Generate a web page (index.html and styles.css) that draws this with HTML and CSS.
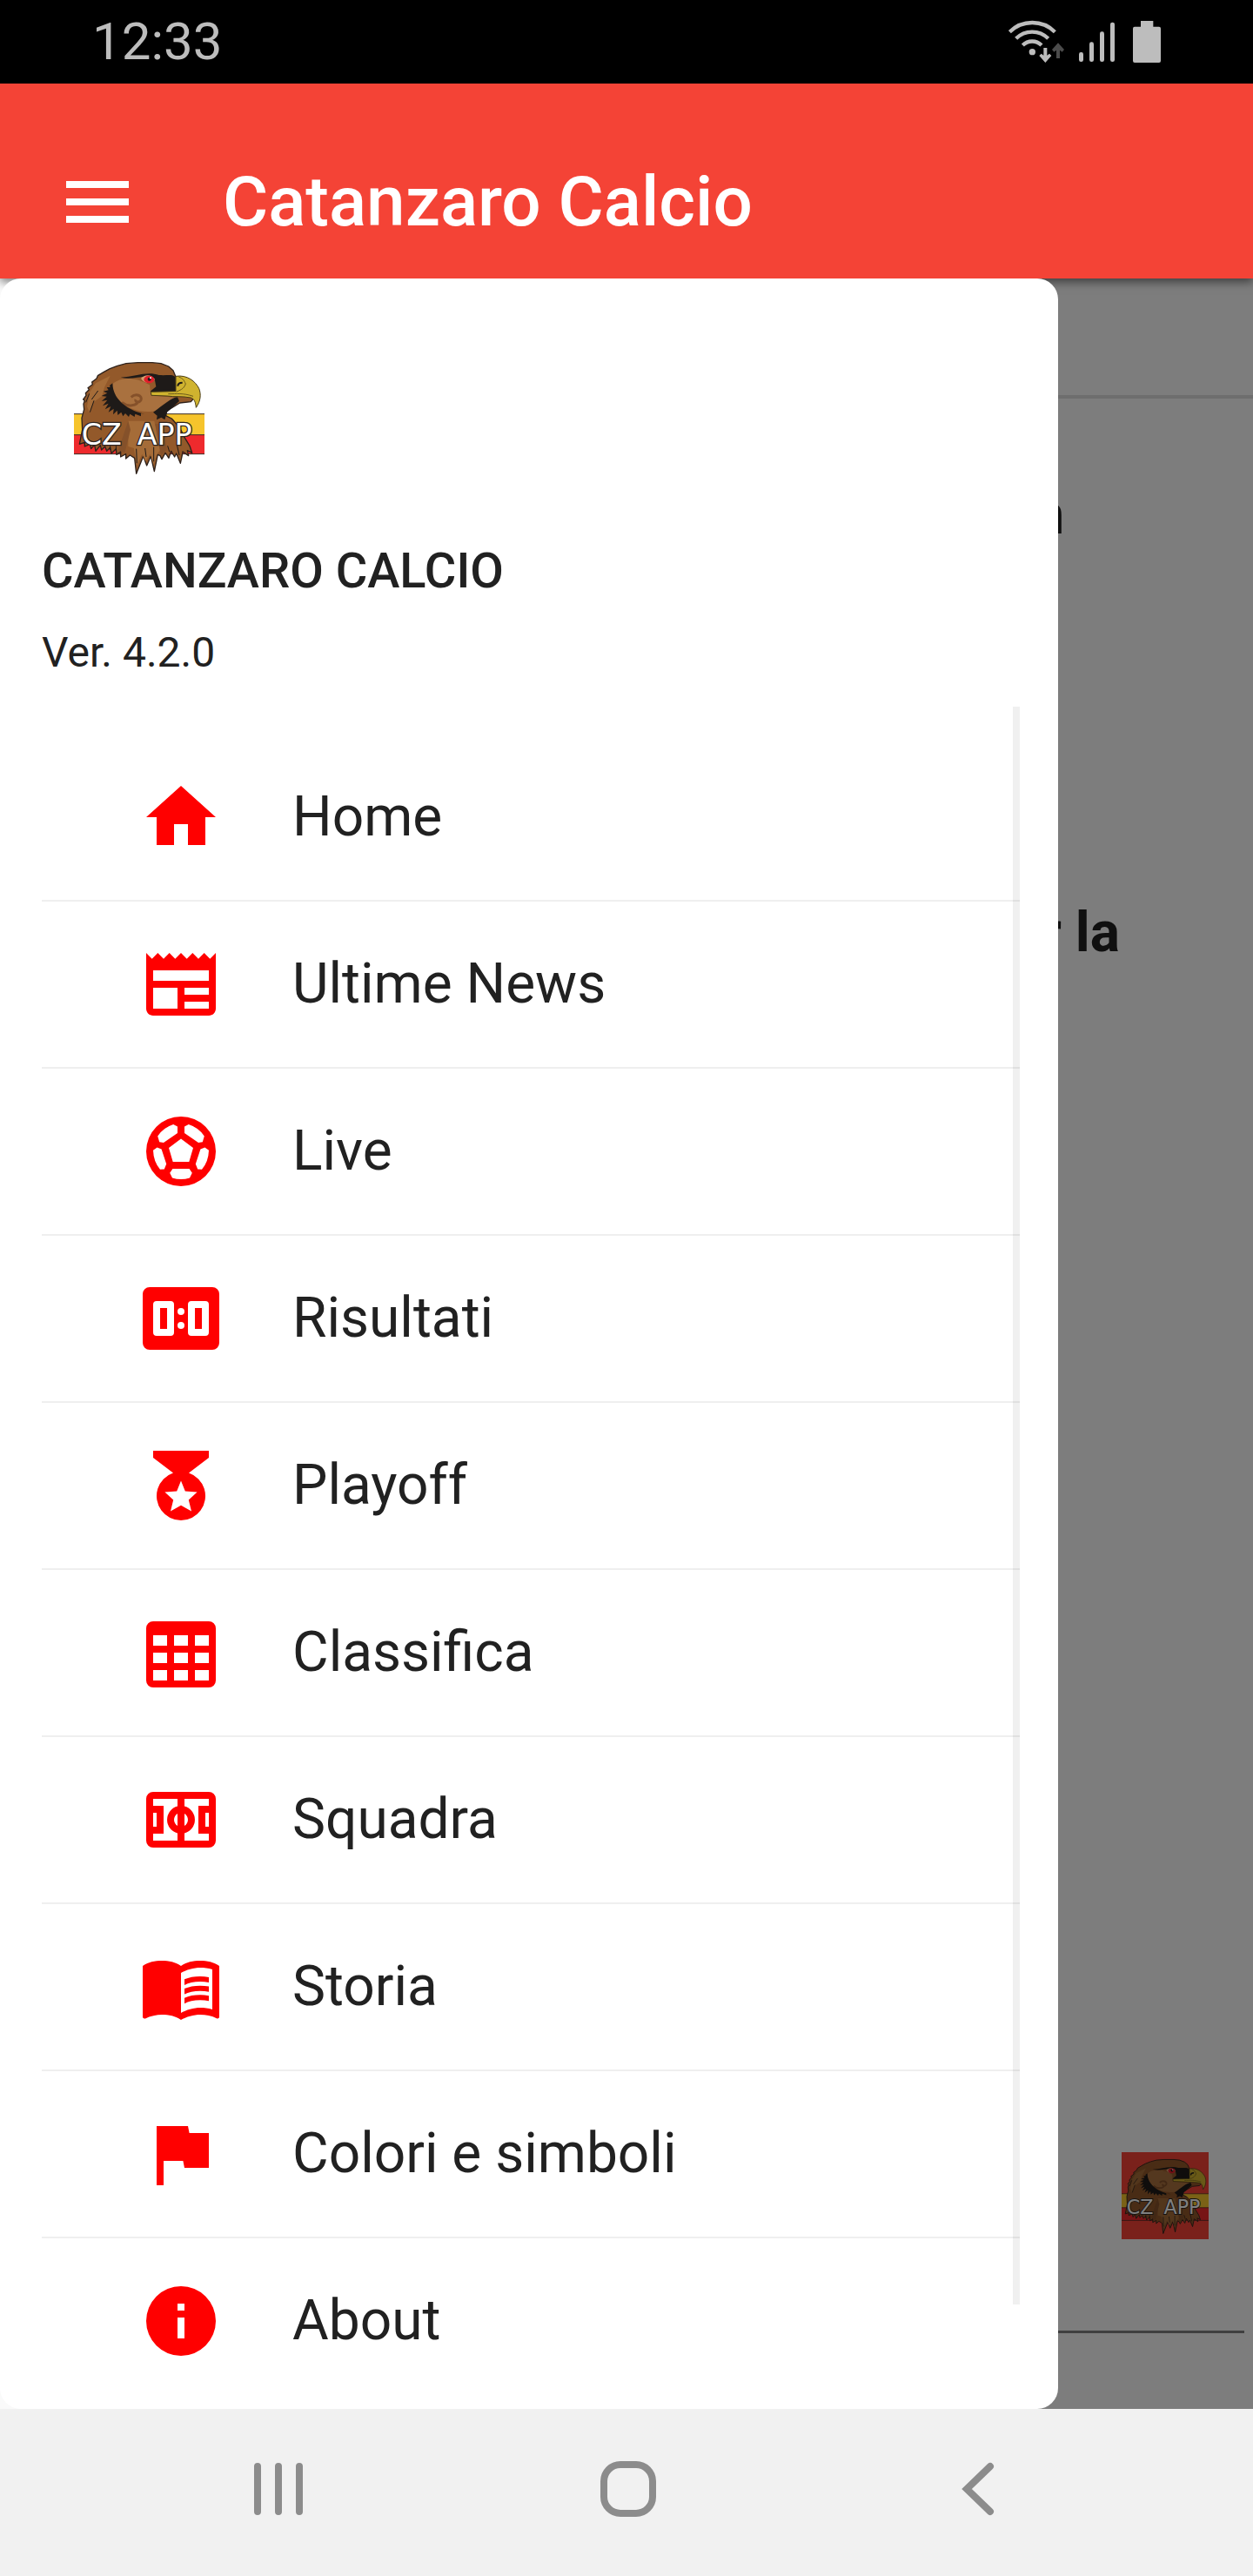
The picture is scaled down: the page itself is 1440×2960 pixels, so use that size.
FILE: index.html
```html
<!DOCTYPE html>
<html lang="it">
<head>
<meta charset="utf-8">
<meta name="viewport" content="width=device-width, initial-scale=1">
<title>Catanzaro Calcio</title>
<link rel="stylesheet" href="styles.css">
</head>
<body>
<svg class="defs" width="0" height="0" aria-hidden="true">
  <symbol id="eagle" viewBox="0 0 450 450">
    <g transform="translate(-75 -41)">
    <!-- flag bands -->
    <path fill="#f6c42c" d="M75 256h450v72H75z"/>
    <path fill="#ee2a2d" d="M75 328h450v66H75z"/>
    <path fill="none" stroke="#3a2a22" stroke-width="3" d="M75 256h450M75 328h450M75 394h450"/>
    <!-- head and neck feathers -->
    <path fill="#93592a" stroke="#2d211b" stroke-width="4" stroke-linejoin="round" d="M108 222L112 210 107 206 117 192 115 184 127 172 123 166 139 154 137 146 153 134 157 124 177 112 199 100 225 90 255 82 295 79 345 79 375 82 401 92 417 106 425 126 430 186 490 200 478 214 440 218 394 246 392 262 412 272 428 290 444 312 458 340 474 366 482 390 466 382 470 400 450 386 448 398 442 426 428 392 422 404 410 384 402 408 390 390 378 412 372 400 364 396 352 454 340 402 326 434 314 402 290 462 284 408 268 398 254 410 254 394 236 404 236 386 222 396 220 376 204 392 200 372 188 384 182 368 170 380 166 364 150 384 146 362 134 376 130 360 112 368 112 354 94 360 98 340 104 310 102 270 110 240z"/>
    <!-- lighter cheek and neck planes -->
    <path fill="#a9713f" d="M208 152c30-26 80-24 128 4l4 36 88 8-34 30c-30 22-84 24-124 6-40-16-62-48-62-84z"/>
    <path fill="#a56c38" d="M150 150l50-26-20 40-8 30-30 22-14 34-8-20 10-50z"/>
    <path fill="#a56c38" d="M262 280h90l20 100-14 20-8 30-12-36-16 26-12-26-18 40-10-60-20-6z"/>
    <path fill="#85512a" d="M262 280l-34 100 22 10 20-80zM355 290l20 110 20-20-10-90z"/>
    <path fill="none" stroke="#85512a" stroke-width="9" d="M272 198c18-16 40-4 34 10-6 12-22 6-18-2M240 216c20 16 44 12 54 2"/>
    <!-- dark shading -->
    <path fill="#1e1a18" d="M208 150l-10 8 2 6-12 0 6 10-18 4 14 6-20 10 18 2-18 16 20-4-16 20 20-8-12 20 20-10-8 20 18-12-2 20 14-14 2 16 12-10 6 14 8-10 12 12 4-10 16 10 2-10 20 8 0-10 24 4c-50-6-122-42-122-108z"/>
    <path fill="#1e1a18" d="M236 130c50-2 90-22 132-8 30 2 44-4 56 6l4 52-72 4-18-6 20-16-4-22-30-12c-30 0-56 10-88 2z"/>
    <path fill="#1e1a18" d="M432 198c-22 2-46 26-84 52l14 12-2 14 16-8 12 8 8-26 22-20 20-18z"/>
    <path fill="none" stroke="#1e1a18" stroke-width="3" d="M128 186l-12 30M144 210l-14 40M158 176l-22 30M290 376l2 50M320 374l4 30M350 370v50M398 366l6 20M430 362l8 36M200 366v14M220 366v16"/>
    <!-- eye -->
    <path fill="#d5a070" d="M306 134c12-14 34-16 48 2-12 18-34 18-48-2z"/>
    <ellipse cx="334" cy="137" rx="18" ry="13" fill="#e0202b"/>
    <circle cx="335" cy="136" r="6" fill="#1e1a18"/>
    <circle cx="339" cy="132" r="3" fill="#fff"/>
    <!-- beak -->
    <path fill="#d0b32f" stroke="#4a3d16" stroke-width="3" stroke-linejoin="round" d="M426 126c40-6 68 18 80 42 8 20 6 44-10 66-2-20-6-30-18-34-30-6-56-2-82-6l-54-2-2-12 86-2z"/>
    <path fill="none" stroke="#6d5c1a" stroke-width="3" d="M428 180c10-6 26-8 32-28-6-12-8-18-24-24M400 187c30 0 50-4 86 8"/>
    <path fill="none" stroke="#1e1a18" stroke-width="6" d="M433 160c0-10 8-12 16-12"/>
    </g>
  </symbol>
</svg>

<div class="status-bar">
  <time class="clock">12:33</time>
  <div class="status-icons">
    <svg class="wifi" viewBox="177 66 192 150" aria-hidden="true">
      <g fill="none" stroke="#bdbdbd" stroke-width="13"><path d="M181 107a111 111 0 0 1 156 0M203 130a78 78 0 0 1 111 0M226 153a46 46 0 0 1 65 0"/></g>
      <circle cx="259" cy="176" r="11" fill="#bdbdbd"/>
      <path fill="#bdbdbd" d="M298 162h12v26l8-6 7 7-21 24-21-24 7-7 8 6z"/>
      <path fill="#4c4c4c" d="M342 198h12v-28l8 6 7-8-21-23-21 23 7 8 8-6z"/>
    </svg>
    <svg class="signal" viewBox="420 75 123 141" aria-hidden="true"><g fill="#bdbdbd"><rect x="420" y="180" width="15" height="33" rx="7"/><rect x="456" y="145" width="15" height="68" rx="7"/><rect x="492" y="109" width="15" height="104" rx="7"/><rect x="528" y="77" width="15" height="136" rx="7"/></g></svg>
    <svg class="battery" viewBox="606 66 96 150" aria-hidden="true"><path fill="#bdbdbd" d="M633 69h43v20h20q6 0 6 6v112q0 6-6 6h-84q-6 0-6-6V95q0-6 6-6h21z"/></svg>
  </div>
</div>

<header class="app-bar">
  <button class="menu-button" type="button" aria-label="Menu"><svg class="icon" viewBox="0 0 24 24"><path d="M3 18h18v-2H3v2zm0-5h18v-2H3v2zm0-7v2h18V6H3z"/></svg></button>
  <h1 class="app-title">Catanzaro Calcio</h1>
</header>

<main class="stage">
  <div class="page">
    <div class="tabs"></div>
    <p class="headline headline-first">n</p>
    <p class="headline headline-second">r la</p>
    <svg class="badge" viewBox="0 0 450 450">
      <rect width="450" height="450" fill="#f44336"/>
      <use href="#eagle" width="450" height="450"/>
      <text class="logo-text" x="26" y="320">CZ</text>
      <text class="logo-text" x="218" y="320">APP</text>
    </svg>
    <hr class="page-rule">
  </div>
  <div class="scrim"></div>
  <aside class="drawer">
    <div class="drawer-head">
      <svg class="drawer-logo" viewBox="0 0 450 450">
        <use href="#eagle" width="450" height="450"/>
        <text class="logo-text" x="26" y="320">CZ</text>
        <text class="logo-text" x="218" y="320">APP</text>
      </svg>
      <h2 class="drawer-name">CATANZARO CALCIO</h2>
      <p class="drawer-version">Ver. 4.2.0</p>
    </div>
    <nav class="menu">
      <a class="item" href="#home"><svg class="icon" viewBox="0 0 24 24"><path d="M10 20v-6h4v6h5v-8h3L12 3 2 12h3v8z"/></svg>Home</a>
      <a class="item" href="#news"><svg class="icon" viewBox="0 0 24 24"><path d="M22 3l-1.67 1.67L18.67 3 17 4.67 15.33 3l-1.66 1.67L12 3l-1.67 1.67L8.67 3 7 4.67 5.33 3 3.67 4.67 2 3v16c0 1.1.9 2 2 2h16c1.1 0 2-.9 2-2zM11 19H4v-6h7zm9 0h-7v-2h7zm0-4h-7v-2h7zm0-4H4V8h16z"/></svg>Ultime News</a>
      <a class="item" href="#live"><svg class="icon" viewBox="0 0 24 24"><path d="M12 2a10 10 0 1 0 0 20 10 10 0 0 0 0-20zM12 8.4l3.5 2.6-1.17 4H9.67L8.5 11zM11 4.9L9.8 4.25Q6.9 5.2 5.3 7.6L5.8 9.3 7 9.5 11 6.75zM13 4.9l1.2-.65q2.9.95 4.5 3.35l-.5 1.7-1.2.2-4-2.75zM4 11.7l1.15-.8 1.25.5 1.4 4.2-.6 1.5-1.2.1Q4.1 15 4 11.7zM20 11.7l-1.15-.8-1.25.5-1.4 4.2.6 1.5 1.2.1q1.9-2.2 2-5.5zM9.6 17h4.8l.8 1.2-.7 1.4q-2.5.8-5 0l-.7-1.4z"/></svg>Live</a>
      <a class="item" href="#risultati"><svg class="icon" viewBox="0 0 24 24"><path d="M3 3h18a2 2 0 0 1 2 2v14a2 2 0 0 1-2 2H3a2 2 0 0 1-2-2V5a2 2 0 0 1 2-2zM5 7a1 1 0 0 0-1 1v8a1 1 0 0 0 1 1h4a1 1 0 0 0 1-1V8a1 1 0 0 0-1-1zm1 2h2v6H6zM15 7a1 1 0 0 0-1 1v8a1 1 0 0 0 1 1h4a1 1 0 0 0 1-1V8a1 1 0 0 0-1-1zm1 2h2v6h-2zM12 9a1 1 0 1 0 0 2 1 1 0 0 0 0-2zM12 13a1 1 0 1 0 0 2 1 1 0 0 0 0-2z"/></svg>Risultati</a>
      <a class="item" href="#playoff"><svg class="icon" viewBox="0 0 24 24"><path d="M4 2h16v2l-5.75 4.37A7 7 0 1 1 9.75 8.37L4 4zM12 10.6l-1.2 3-3.45.25 2.45 2.25L9 19.4l3-1.7 3 1.7-.8-3.3 2.45-2.25-3.45-.25z"/></svg>Playoff</a>
      <a class="item" href="#classifica"><svg class="icon" viewBox="0 0 24 24"><path d="M4 3h16a2 2 0 0 1 2 2v15a2 2 0 0 1-2 2H4a2 2 0 0 1-2-2V5a2 2 0 0 1 2-2zM4 7v3h4V7zM10 7v3h4V7zM16 7v3h4V7zM4 12v3h4v-3zM10 12v3h4v-3zM16 12v3h4v-3zM4 17v3h4v-3zM10 17v3h4v-3zM16 17v3h4v-3z"/></svg>Classifica</a>
      <a class="item" href="#squadra"><svg class="icon" viewBox="0 0 24 24"><path d="M4 4h16a2 2 0 0 1 2 2v12a2 2 0 0 1-2 2H4a2 2 0 0 1-2-2V6a2 2 0 0 1 2-2zM11 6H4v2h3v8H4v2h7v-2.13a4 4 0 0 1 0-7.74zM13 6h7v2h-3v8h3v2h-7v-2.13a4 4 0 0 0 0-7.74zM4 10v4h1v-4zM19 10v4h1v-4zM11 10.27a2 2 0 0 0 0 3.46zM13 10.27a2 2 0 0 1 0 3.46z"/></svg>Squadra</a>
      <a class="item" href="#storia"><svg class="icon" viewBox="0 0 24 24"><path d="M12 6C10.55 4.9 8.45 4.5 6.5 4.5S2.45 4.9 1 6v14.65c0 .25.25.5.5.5.1 0 .15-.05.25-.05C3.1 20.45 5.05 20 6.5 20c1.95 0 4.05.4 5.5 1.5 1.35-.85 3.8-1.5 5.5-1.5 1.65 0 3.35.3 4.75 1.05.1.05.15.05.25.05.25 0 .5-.25.5-.5V6c-1.49-1.12-3.54-1.5-5.5-1.5S13.45 4.9 12 6zm9 12.5c-1.1-.35-2.3-.5-3.5-.5-1.7 0-4.15.65-5.5 1.5V8c1.35-.85 3.8-1.5 5.5-1.5 1.2 0 2.4.15 3.5.5z"/><path d="M17.5 10.5c.88 0 1.73.09 2.5.26V9.24c-.79-.15-1.64-.24-2.5-.24-1.7 0-3.24.29-4.5.83v1.66c1.13-.64 2.7-.99 4.5-.99zM13 12.49v1.66c1.13-.64 2.7-.99 4.5-.99.88 0 1.73.09 2.5.26V11.9c-.79-.15-1.64-.24-2.5-.24-1.7 0-3.24.3-4.5.83zM17.5 14.33c-1.7 0-3.24.29-4.5.83v1.66c1.13-.64 2.7-.99 4.5-.99.88 0 1.73.09 2.5.26v-1.52c-.79-.16-1.64-.24-2.5-.24z"/></svg>Storia</a>
      <a class="item" href="#colori"><svg class="icon" viewBox="0 0 24 24"><path d="M14.4 6L14 4H5v17h2v-7h5.6l.4 2h7V6z"/></svg>Colori e simboli</a>
      <a class="item" href="#about"><svg class="icon" viewBox="0 0 24 24"><path d="M12 2a10 10 0 1 0 0 20 10 10 0 0 0 0-20zm1 15h-2v-6h2zm0-8h-2V7h2z"/></svg>About</a>
    </nav>
  </aside>
</main>

<footer class="system-nav">
  <button class="nav-button" type="button" aria-label="Recenti"><svg class="nav-icon" viewBox="0 0 64 64"><path d="M8 6v52M32 6v52M56 6v52"/></svg></button>
  <button class="nav-button" type="button" aria-label="Schermata Home"><svg class="nav-icon" viewBox="0 0 64 64"><rect x="4" y="4" width="56" height="56" rx="19"/></svg></button>
  <button class="nav-button" type="button" aria-label="Indietro"><svg class="nav-icon" viewBox="0 0 64 64"><path d="M46 6L19 32l27 26"/></svg></button>
</footer>
</body>
</html>
```
FILE: styles.css
```css
* {
  box-sizing: border-box;
}

body {
  display: flex;
  flex-direction: column;
  min-height: 100vh;
  margin: 0;
  background: #fafafa;
  color: #212121;
  font-family: Roboto, "Liberation Sans", sans-serif;
}

h1,
h2,
p {
  margin: 0;
}

button {
  padding: 0;
  border: 0;
  background: none;
}

svg {
  display: block;
  flex: none;
}

.defs {
  position: absolute;
}

.logo-text {
  fill: #fff;
  stroke: #2d2420;
  stroke-width: 8px;
  paint-order: stroke;
  font: 100px "DejaVu Sans", sans-serif;
}

/* Status bar */
.status-bar {
  display: flex;
  align-items: center;
  justify-content: space-between;
  height: 96px;
  padding: 0 106px;
  background: #000;
}

.clock {
  color: #bdbdbd;
  font-size: 60px;
  line-height: 72px;
}

.status-icons {
  display: flex;
  align-items: center;
}

.wifi {
  width: 64px;
  height: 50px;
}

.signal {
  width: 41px;
  height: 47px;
  margin: 0 21px 0 17px;
}

.battery {
  width: 32px;
  height: 50px;
}

/* App bar */
.app-bar {
  position: relative;
  z-index: 1;
  display: flex;
  align-items: center;
  gap: 96px;
  height: 224px;
  padding: 48px 64px 0;
  background: #f44336;
  box-shadow: 0 4px 10px rgba(0, 0, 0, 0.5);
}

.icon {
  width: 96px;
  height: 96px;
  fill: currentColor;
  fill-rule: evenodd;
}

.menu-button,
.app-title {
  color: #fff;
}

.app-title {
  font-size: 80px;
  font-weight: 500;
  line-height: 96px;
}

/* Page under the drawer */
.stage {
  display: grid;
  flex: 1;
}

.page,
.scrim,
.drawer {
  grid-area: 1 / 1;
}

.page {
  display: flex;
  flex-direction: column;
}

.tabs {
  height: 138px;
  border-bottom: 4px solid #dcdcdc;
}

.headline {
  text-align: right;
  font-size: 64px;
  font-weight: 700;
  line-height: 80px;
}

.headline-first {
  margin-top: 94px;
  padding-right: 217px;
}

.headline-second {
  margin-top: 400px;
  padding-right: 153px;
}

.badge {
  align-self: flex-end;
  width: 100px;
  height: 100px;
  margin: auto 51px 105px 0;
}

.page-rule {
  width: calc(100% - 20px);
  height: 3px;
  margin: 0 10px 87px;
  border: 0;
  background: #808080;
}

.scrim {
  margin-left: 24px;
  background: rgba(0, 0, 0, 0.5);
}

/* Drawer */
.drawer {
  z-index: 2;
  width: calc(100% - 224px);
  padding: 84px 44px 4px 48px;
  border-radius: 24px;
  background: #fff;
}

.drawer-logo {
  width: 150px;
  height: 150px;
  margin: 0 0 70px 37px;
}

.drawer-name {
  font-size: 56px;
  font-weight: 500;
  line-height: 64px;
}

.drawer-version {
  margin: 34px 0;
  font-size: 48px;
  line-height: 56px;
}

.menu {
  position: relative;
  padding-top: 32px;
}

/* scroll thumb */
.menu::after {
  content: "";
  position: absolute;
  top: 0;
  right: 0;
  bottom: 116px;
  width: 8px;
  background: rgba(0, 0, 0, 0.06);
}

.item {
  display: flex;
  align-items: center;
  gap: 80px;
  height: 192px;
  padding-left: 112px;
  border-bottom: 2px solid #efefef;
  color: #212121;
  font-size: 64px;
  line-height: 80px;
  text-decoration: none;
}

.item:last-child {
  border-bottom-color: transparent;
}

.item .icon {
  color: #f00;
}

/* System navigation */
.system-nav {
  display: flex;
  justify-content: center;
  height: 192px;
  padding: 0 0 8px 4px;
  background: #f1f1f1;
}

.nav-button {
  display: flex;
  align-items: center;
  justify-content: center;
  flex: 0 0 28%;
}

.nav-icon {
  width: 64px;
  height: 64px;
  fill: none;
  stroke: #8c8c8c;
  stroke-width: 8;
  stroke-linecap: round;
}
```
